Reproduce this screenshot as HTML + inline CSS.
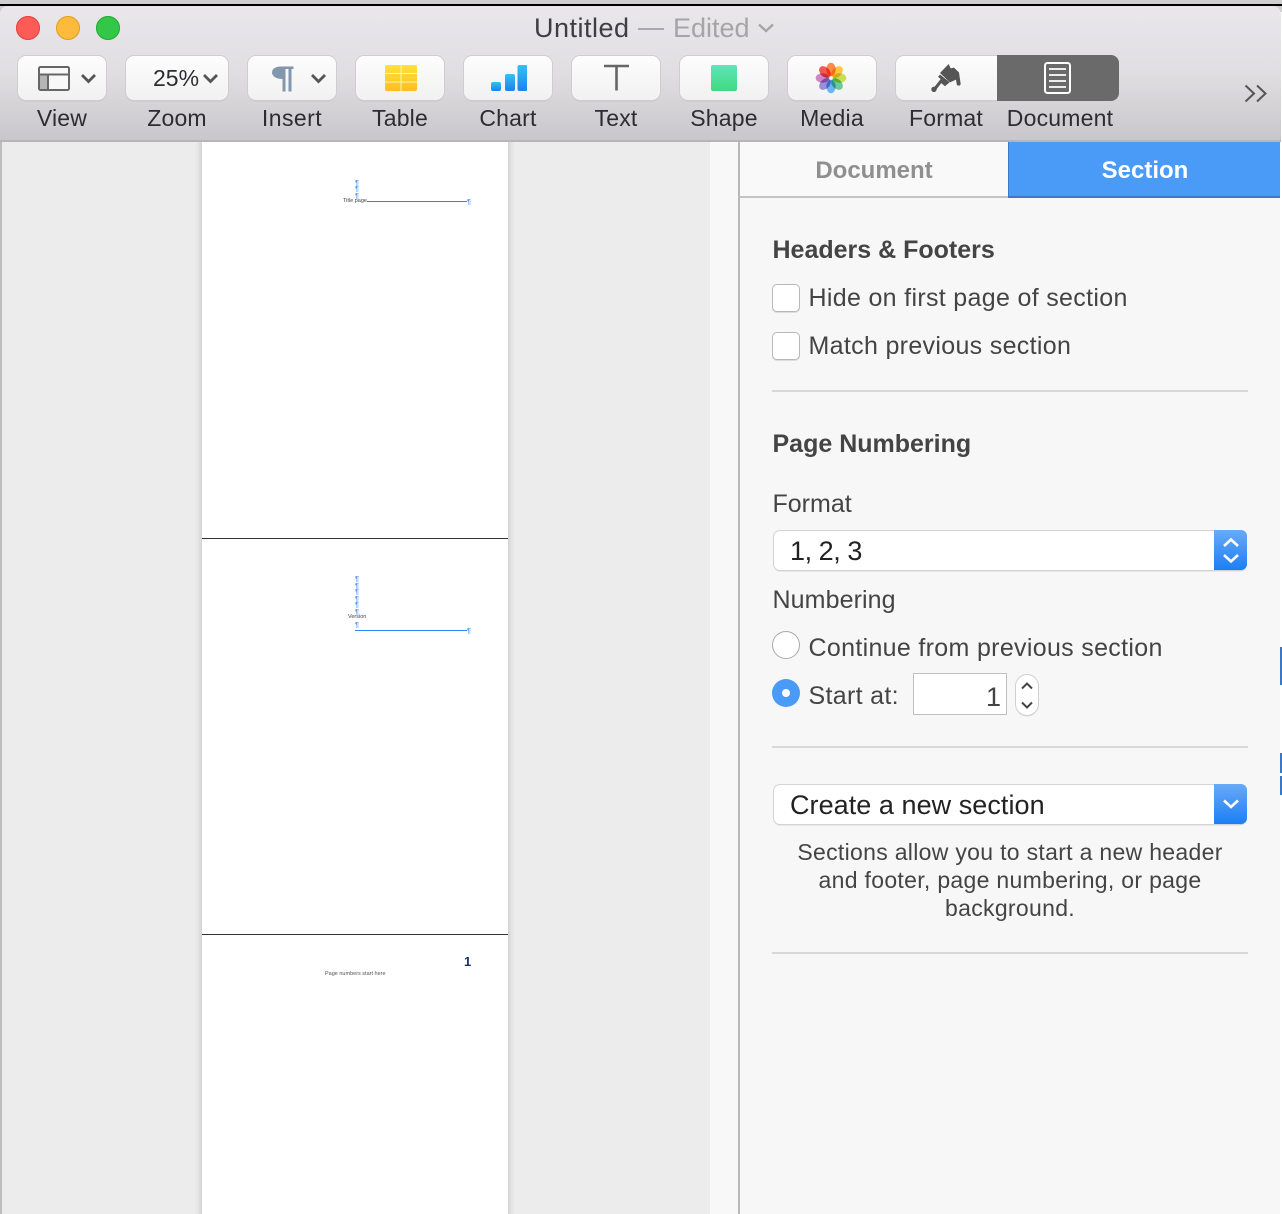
<!DOCTYPE html>
<html>
<head>
<meta charset="utf-8">
<style>
html,body{margin:0;padding:0;width:1282px;height:1214px;overflow:hidden;background:#fff}
body{position:relative;font-family:"Liberation Sans",sans-serif;color:#444}
div,span,svg{position:absolute;box-sizing:border-box}
.t{white-space:nowrap;line-height:1}
.btn{top:56px;height:44px;background:linear-gradient(#fdfdfd,#f1f1f1);border-radius:8px;box-shadow:0 0 0 1px #cfcdd0,0 1px 1px #aaa}
.lab{top:106px;height:24px;line-height:24px;font-size:23px;color:#2e2c30;text-align:center;white-space:nowrap;letter-spacing:.2px}
.sec{font-size:25px;font-weight:bold;color:#444;white-space:nowrap;line-height:30px;height:30px}
.row{font-size:25px;color:#444;white-space:nowrap;line-height:30px;height:30px;letter-spacing:.32px}
.cb{width:28px;height:28px;border-radius:5px;background:#fff;border:1px solid #b8b8b8;box-shadow:0 1px 0 #ddd}
.hr{left:772px;width:476px;height:2px;background:#d8d8d8}
.sel{left:774px;width:472px;height:39px;background:#fff;border-radius:6px;box-shadow:0 0 0 1px #d4d4d4,0 1px 1px #999}
.cap{left:1214px;width:33px;height:40px;background:linear-gradient(#69aaf8,#1b7ff5);border-radius:0 6px 6px 0}
.pil{color:#5f9cf0;font-size:7px;font-weight:bold;line-height:1;white-space:nowrap}
.sen{left:772px;width:476px;height:28px;line-height:28px;text-align:center;font-size:23px;color:#444;letter-spacing:.31px;white-space:nowrap}
</style>
</head>
<body>
<!-- top strip -->
<div style="left:0;top:0;width:1282px;height:4px;background:#cfcfcf"></div>
<div style="left:0;top:4px;width:1282px;height:2px;background:#000"></div>
<div style="left:0;top:6px;width:1282px;height:6px;background:#cfcfcf"></div>
<!-- window toolbar -->
<div style="left:0;top:6px;width:1281px;height:136px;background:linear-gradient(#e9e7ea,#e0dee1 50%,#c9c7ca);border-radius:8px 8px 0 0;border-bottom:2px solid #b6b6b6"></div>

<!-- traffic lights -->
<div style="left:16px;top:16px;width:24px;height:24px;border-radius:50%;background:#fc5b57;box-shadow:inset 0 0 0 1px #e2463f"></div>
<div style="left:56px;top:16px;width:24px;height:24px;border-radius:50%;background:#fdbb3d;box-shadow:inset 0 0 0 1px #e0a028"></div>
<div style="left:96px;top:16px;width:24px;height:24px;border-radius:50%;background:#33c748;box-shadow:inset 0 0 0 1px #27aa35"></div>

<!-- title -->
<div class="t" style="left:534px;top:14px;font-size:27px;letter-spacing:.5px;color:#3f3d42;height:28px;line-height:28px">Untitled</div>
<div style="left:638px;top:28px;width:26px;height:2px;background:#aaa8ab"></div>
<div class="t" style="left:673px;top:14px;font-size:27px;color:#a6a4a7;height:28px;line-height:28px">Edited</div>
<svg style="left:757px;top:23px" width="18" height="10" viewBox="0 0 18 10"><path d="M2 1.500L9 8L16 1.500" fill="none" stroke="#a6a4a7" stroke-width="2.400"/></svg>

<!-- toolbar buttons -->
<div class="btn" style="left:18px;width:88px"></div>
<svg style="left:38px;top:66px" width="32" height="25" viewBox="0 0 32 25"><rect x="1" y="1" width="30" height="23" rx="1.500" fill="#f8f8f8" stroke="#666" stroke-width="2"/><rect x="2" y="9" width="8" height="14" fill="#b4b4b4"/><path d="M1 8.500H31M10 8.500V24" stroke="#666" stroke-width="2" fill="none"/></svg>
<svg style="left:80px;top:73px" width="17" height="11" viewBox="0 0 17 11"><path d="M2 2L8.500 8.500L15 2" fill="none" stroke="#555" stroke-width="2.800"/></svg>

<div class="btn" style="left:126px;width:102px"></div>
<div class="t" style="left:153px;top:66px;font-size:23px;color:#2e2c30;height:24px;line-height:24px">25%</div>
<svg style="left:202px;top:73px" width="17" height="11" viewBox="0 0 17 11"><path d="M2 2L8.500 8.500L15 2" fill="none" stroke="#555" stroke-width="2.800"/></svg>

<div class="btn" style="left:248px;width:88px"></div>
<svg style="left:271px;top:65px" width="24" height="27" viewBox="0 0 24 27"><path d="M10 1.500H22.500V4H20.500V26.500H17.500V4H14.500V26.500H11.500V14C5 14 1 11 1 7.500C1 3.500 5 1.500 10 1.500Z" fill="#8296ae"/></svg>
<svg style="left:310px;top:73px" width="17" height="11" viewBox="0 0 17 11"><path d="M2 2L8.500 8.500L15 2" fill="none" stroke="#555" stroke-width="2.800"/></svg>

<div class="btn" style="left:356px;width:88px"></div>
<svg style="left:385px;top:65px" width="32" height="26" viewBox="0 0 32 26"><defs><linearGradient id="yg" x1="0" y1="0" x2="0" y2="1"><stop offset="0" stop-color="#ffe433"/><stop offset="1" stop-color="#fdbd22"/></linearGradient></defs><rect width="32" height="26" rx="2" fill="url(#yg)"/><path d="M16 0V26M0 8.500H32M0 17H32" stroke="#fff3b5" stroke-width="1"/></svg>

<div class="btn" style="left:464px;width:88px"></div>
<svg style="left:491px;top:65px" width="36" height="26" viewBox="0 0 36 26"><defs><linearGradient id="bg" x1="0" y1="0" x2="0" y2="1"><stop offset="0" stop-color="#35c0f5"/><stop offset="1" stop-color="#1d82ee"/></linearGradient></defs><rect x="0" y="17" width="10" height="9" rx="2" fill="url(#bg)"/><rect x="14" y="9" width="10" height="17" rx="2" fill="url(#bg)"/><rect x="26.500" y="0" width="10" height="26" rx="2" fill="url(#bg)"/></svg>

<div class="btn" style="left:572px;width:88px"></div>
<svg style="left:603px;top:64px" width="27" height="27" viewBox="0 0 27 27"><path d="M1 2H26M13.500 2V26.500" fill="none" stroke="#666" stroke-width="2.600"/></svg>

<div class="btn" style="left:680px;width:88px"></div>
<div style="left:711px;top:65px;width:26px;height:26px;border-radius:2px;background:linear-gradient(#61e4bb,#3fdb7f)"></div>

<div class="btn" style="left:788px;width:88px"></div>
<svg style="left:815px;top:62px" width="32" height="32" viewBox="-16 -16 32 32">
<g style="isolation:isolate">
<ellipse style="mix-blend-mode:multiply" cx="0" cy="-8.500" rx="4.700" ry="6.800" fill="#fb8a4e"/>
<ellipse style="mix-blend-mode:multiply" cx="0" cy="-8.500" rx="4.700" ry="6.800" fill="#ffc83c" transform="rotate(45)"/>
<ellipse style="mix-blend-mode:multiply" cx="0" cy="-8.500" rx="4.700" ry="6.800" fill="#cbdc55" transform="rotate(90)"/>
<ellipse style="mix-blend-mode:multiply" cx="0" cy="-8.500" rx="4.700" ry="6.800" fill="#6fc99c" transform="rotate(135)"/>
<ellipse style="mix-blend-mode:multiply" cx="0" cy="-8.500" rx="4.700" ry="6.800" fill="#6bb6f0" transform="rotate(180)"/>
<ellipse style="mix-blend-mode:multiply" cx="0" cy="-8.500" rx="4.700" ry="6.800" fill="#9a90d8" transform="rotate(225)"/>
<ellipse style="mix-blend-mode:multiply" cx="0" cy="-8.500" rx="4.700" ry="6.800" fill="#cf86c4" transform="rotate(270)"/>
<ellipse style="mix-blend-mode:multiply" cx="0" cy="-8.500" rx="4.700" ry="6.800" fill="#f25a50" transform="rotate(315)"/>
</g></svg>

<div class="btn" style="left:896px;width:101px;border-radius:8px 0 0 8px"></div>
<svg style="left:930px;top:63px" width="33.300" height="30" viewBox="120 40 100 90">
<path d="M150 70L176 43L182 56L192 54L207 68L212 102A6 6 0 0 1 200 102L198 90L180 98Z" fill="#555"/>
<path d="M147 78L172 98L165 104L153 94L136 116" fill="none" stroke="#555" stroke-width="9"/>
<circle cx="132" cy="119" r="8" fill="#555"/></svg>
<div style="left:997px;top:55px;width:122px;height:46px;background:#6a6a6a;border-radius:0 8px 8px 0"></div>
<svg style="left:1043px;top:61px" width="29" height="34" viewBox="0 0 29 34"><rect x="2" y="2" width="25" height="30" rx="2.500" fill="none" stroke="#fff" stroke-width="2"/><path d="M6 8H23M6 14H23M6 20H23M6 26H23" stroke="#fff" stroke-width="1.800"/></svg>

<!-- labels -->
<div class="lab" style="left:18px;width:88px">View</div>
<div class="lab" style="left:126px;width:102px">Zoom</div>
<div class="lab" style="left:248px;width:88px;letter-spacing:.45px">Insert</div>
<div class="lab" style="left:356px;width:88px">Table</div>
<div class="lab" style="left:464px;width:88px">Chart</div>
<div class="lab" style="left:572px;width:88px">Text</div>
<div class="lab" style="left:680px;width:88px">Shape</div>
<div class="lab" style="left:788px;width:88px">Media</div>
<div class="lab" style="left:896px;width:100px">Format</div>
<div class="lab" style="left:1000px;width:120px">Document</div>

<svg style="left:1244px;top:84px" width="24" height="19" viewBox="0 0 24 19"><path d="M1.500 1.500L10 9.500L1.500 17.500M13 1.500L21.500 9.500L13 17.500" fill="none" stroke="#555" stroke-width="2"/></svg>

<!-- canvas -->
<div style="left:0;top:142px;width:2px;height:1072px;background:#bdbdbd"></div>
<div style="left:2px;top:142px;width:708px;height:1072px;background:#ececec;overflow:hidden">
  <div style="left:200px;top:-10px;width:306px;height:1100px;background:#fff;box-shadow:0 0 7px rgba(0,0,0,.22)"></div>
</div>
<div style="left:710px;top:142px;width:28px;height:1072px;background:#f8f8f8"></div>
<div style="left:738px;top:142px;width:2px;height:1072px;background:#b8b8b8"></div>
<div style="left:202px;top:538px;width:306px;height:1px;background:#333"></div>
<div style="left:202px;top:934px;width:306px;height:1px;background:#333"></div>

<!-- page 1 -->
<div class="pil" style="left:355px;top:180px">¶</div>
<div class="pil" style="left:355px;top:186px">¶</div>
<div class="pil" style="left:355px;top:193px">¶</div>
<div class="t" style="left:343px;top:198px;font-size:5.500px;color:#444;height:6px;line-height:6px">Title page</div>
<div style="left:367px;top:201px;width:100px;height:1px;background:#3a84d8"></div>
<div class="pil" style="left:467px;top:199px">¶</div>

<!-- page 2 -->
<div class="pil" style="left:355px;top:576px">¶</div>
<div class="pil" style="left:355px;top:583px">¶</div>
<div class="pil" style="left:355px;top:589px">¶</div>
<div class="pil" style="left:355px;top:596px">¶</div>
<div class="pil" style="left:355px;top:602px">¶</div>
<div class="pil" style="left:355px;top:609px">¶</div>
<div class="t" style="left:348px;top:614px;font-size:5.500px;color:#444;height:6px;line-height:6px">Version</div>
<div class="pil" style="left:355px;top:622px">¶</div>
<div style="left:355px;top:630px;width:112px;height:1px;background:#2f86ee"></div>
<div class="pil" style="left:467px;top:628px">¶</div>

<!-- page 3 -->
<div class="t" style="left:464px;top:955px;font-size:13px;font-weight:bold;color:#14305f;height:14px;line-height:14px">1</div>
<div class="t" style="left:325px;top:971px;font-size:5.500px;color:#555;height:6px;line-height:6px">Page numbers start here</div>

<!-- sidebar -->
<div style="left:740px;top:142px;width:542px;height:1072px;background:#f7f7f7"></div>
<div style="left:740px;top:142px;width:268px;height:56px;background:#f9f9f9;border-bottom:2px solid #c4c4c4"></div>
<div class="t" style="left:740px;width:268px;top:157px;height:28px;line-height:28px;text-align:center;font-size:24px;font-weight:bold;color:#8f8f8f">Document</div>
<div style="left:1008px;top:142px;width:272px;height:56px;background:#4a9bf7;border-bottom:2px solid #3b79c5;border-left:1px solid #3b79c5"></div>
<div class="t" style="left:1009px;width:272px;top:157px;height:28px;line-height:28px;text-align:center;font-size:24px;font-weight:bold;color:#fff">Section</div>
<div style="left:1280px;top:142px;width:2px;height:1072px;background:#fff"></div>
<div style="left:1280px;top:647px;width:2px;height:38px;background:#3a78c5"></div>
<div style="left:1280px;top:753px;width:2px;height:20px;background:#3a78c5"></div>
<div style="left:1280px;top:776px;width:2px;height:19px;background:#3a78c5"></div>

<div class="sec" style="left:772.500px;top:235px">Headers &amp; Footers</div>
<div class="cb" style="left:772px;top:284px"></div>
<div class="row" style="left:808.500px;top:283px">Hide on first page of section</div>
<div class="cb" style="left:772px;top:332px"></div>
<div class="row" style="left:808.500px;top:331px">Match previous section</div>
<div class="hr" style="top:390px"></div>

<div class="sec" style="left:772.500px;top:429px">Page Numbering</div>
<div class="row" style="left:772.500px;top:489px;letter-spacing:0">Format</div>
<div class="sel" style="top:530.500px"></div>
<div class="t" style="left:790px;top:536px;font-size:27px;letter-spacing:-.45px;color:#222;height:30px;line-height:30px">1, 2, 3</div>
<div class="cap" style="top:530px"></div>
<svg style="left:1221px;top:537px" width="20" height="27" viewBox="0 0 20 27"><path d="M3 9L10 2.500L17 9M3 18L10 24.500L17 18" fill="none" stroke="#fff" stroke-width="2.600"/></svg>
<div class="row" style="left:772.500px;top:585px;letter-spacing:.1px">Numbering</div>

<div style="left:772px;top:631px;width:28px;height:28px;border-radius:50%;background:#fff;border:1px solid #aaa"></div>
<div class="row" style="left:808.500px;top:633px">Continue from previous section</div>
<div style="left:772px;top:679px;width:28px;height:28px;border-radius:50%;background:#4a9bf7"></div>
<div style="left:782px;top:689px;width:8px;height:8px;border-radius:50%;background:#fff"></div>
<div class="row" style="left:808.500px;top:681px">Start at:</div>
<div style="left:913px;top:673px;width:94px;height:42px;background:#fff;border:1px solid #c0c0c0"></div>
<div class="t" style="left:913px;width:88px;top:682px;height:30px;line-height:30px;text-align:right;font-size:27px;color:#444">1</div>
<div style="left:1016px;top:675px;width:22px;height:40px;background:#fff;border-radius:11px;box-shadow:0 0 0 1px #d0d0d0,0 1px 1px #aaa"></div>
<svg style="left:1019px;top:681px" width="16" height="29" viewBox="0 0 16 29"><path d="M3 7.500L8 2.500L13 7.500M3 21.500L8 26.500L13 21.500" fill="none" stroke="#444" stroke-width="2"/></svg>
<div class="hr" style="top:746px"></div>

<div class="sel" style="top:784.500px"></div>
<div class="t" style="left:790px;top:790px;font-size:27px;letter-spacing:.05px;color:#222;height:30px;line-height:30px">Create a new section</div>
<div class="cap" style="top:784px"></div>
<svg style="left:1221px;top:798px" width="20" height="12" viewBox="0 0 20 12"><path d="M3 2.500L10 9L17 2.500" fill="none" stroke="#fff" stroke-width="2.600"/></svg>

<div class="sen" style="top:838px">Sections allow you to start a new header</div>
<div class="sen" style="top:866px">and footer, page numbering, or page</div>
<div class="sen" style="top:894px">background.</div>
<div class="hr" style="top:952px"></div>
</body>
</html>
